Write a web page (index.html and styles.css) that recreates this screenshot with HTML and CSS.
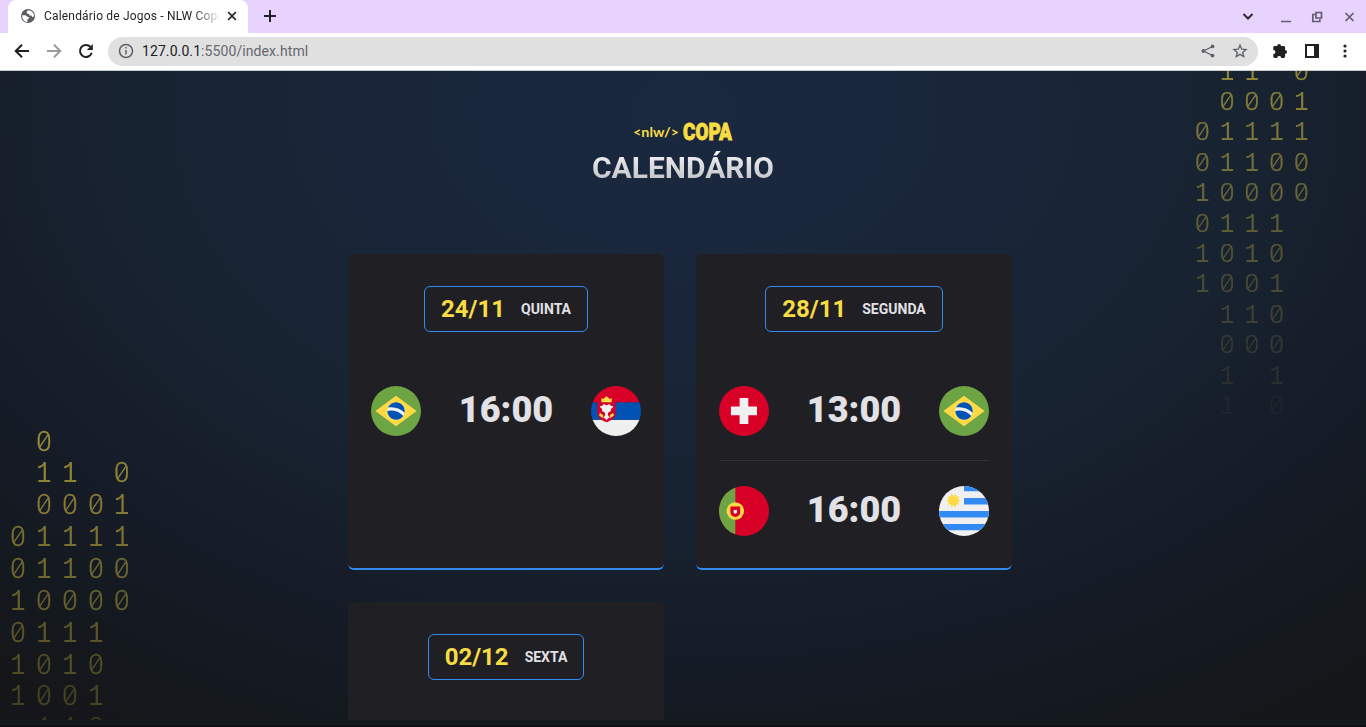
FILE: index.html
```html
<!DOCTYPE html>
<html lang="pt-BR">
<head>
<meta charset="utf-8">
<title>Calendário de Jogos - NLW Copa</title>
<link rel="stylesheet" href="styles.css">
</head>
<body>
<svg class="defs" width="0" height="0">
  <defs>
    <clipPath id="disc"><circle cx="256" cy="256" r="256"/></clipPath>
    <symbol id="brazil" viewBox="0 0 512 512">
      <circle cx="256" cy="256" r="256" fill="#6da544"/>
      <path fill="#ffda44" d="M256 100l211 156-211 156L45 256z"/>
      <circle cx="256" cy="256" r="89" fill="#f0f0f0"/>
      <path fill="#0052b4" d="M212 250c-16 0-30 2-44 7 0 49 40 89 88 89 31 0 58-16 74-39-29-35-71-57-118-57zM343 274c1-6 2-12 2-18 0-49-40-89-89-89-37 0-68 22-82 54 12-3 25-4 38-4 51 0 98 22 131 57z"/>
    </symbol>
    <symbol id="serbia" viewBox="0 0 512 512">
      <g clip-path="url(#disc)">
        <path fill="#f0f0f0" d="M0 345h512v167H0z"/>
        <path fill="#0052b4" d="M0 167h512v178H0z"/>
        <path fill="#d80027" d="M0 0h512v167H0z"/>
        <path fill="#d80027" d="M66 167v109c0 71 93 93 93 93s93-22 93-93V167z"/>
        <path fill="#ffda44" d="M106 167h106v-44l-18 9-35-27-35 27-18-9zM92 275l35 28-8 24-36-26zM226 275l-35 28 8 24 36-26z"/>
        <path fill="#f0f0f0" d="M203 239l26-26c-8-8-16-12-26-12l-18-16-26 14-26-14-18 16c-10 0-18 4-26 12l26 26c-7 12 2 27 19 27l10 13v21l-20 28 20 2 15 20 15-20 20-2-20-28v-21l10-13c17 0 26-15 19-27z"/>
      </g>
    </symbol>
    <symbol id="switzerland" viewBox="0 0 512 512">
      <circle cx="256" cy="256" r="256" fill="#d80027"/>
      <path fill="#f0f0f0" d="M389 211h-89v-89h-89v89h-89v89h89v89h89v-89h89z"/>
    </symbol>
    <symbol id="portugal" viewBox="0 0 512 512">
      <g clip-path="url(#disc)">
        <path fill="#d80027" d="M0 0h512v512H0z"/>
        <path fill="#6da544" d="M0 0h167v512H0z"/>
        <circle cx="167" cy="256" r="89" fill="#ffda44"/>
        <path fill="#d80027" d="M117 211v56c0 28 22 50 50 50s50-22 50-50v-56z"/>
        <path fill="#f0f0f0" d="M150 245v22c0 9 8 17 17 17s17-8 17-17v-22z"/>
      </g>
    </symbol>
    <symbol id="uruguay" viewBox="0 0 512 512">
      <g clip-path="url(#disc)">
        <path fill="#f0f0f0" d="M0 0h512v512H0z"/>
        <path fill="#338af3" d="M256 0h256v55H256zM256 123h256v67H256zM0 256h512v67H0zM0 390h512v63H0z"/>
        <path fill="#ffda44" d="M223 149l-31 14 17 30-33-6-5 33-23-24-23 24-4-33-34 6 17-30-31-14 31-15-17-29 34 6 4-33 23 24 23-24 5 33 33-6-17 29z"/>
      </g>
    </symbol>
  </defs>
</svg>

<div class="browser">
  <header class="tabstrip">
    <div class="tab">
      <svg class="globe" viewBox="0 0 16 16"><circle cx="8" cy="8" r="7" fill="#5a5e63"/><path d="M2.200 7.200l3.300.1 1.800 1.500 1.500.2v1.600l-1.500.9.200 2.600C4.300 14 2 11 2.200 7.200zM8.200 2.200L6.600 3.800l.5 1.700 2 .4.300 1.500h2l.8 1.500 1.800-.5C14.200 5 11.400 2.200 8.200 2.200z" fill="#fff"/></svg>
      <span class="tab-title">Calendário de Jogos - NLW Copa</span>
      <svg class="tab-close" viewBox="0 0 10 10"><path d="M1.200 1.200l7.600 7.600M8.800 1.200L1.200 8.800"/></svg>
    </div>
    <svg class="new-tab" viewBox="0 0 12 12"><path d="M6 0v12M0 6h12"/></svg>
    <svg class="window-controls" viewBox="0 0 112 16">
      <path d="M3.500 5L8 9.500 12.500 5" stroke="#2c2930" stroke-width="2"/>
      <path d="M41 12.500h10M75 5.500h-2.200v7h7v-2.200M76 3.500h5.500v5.500H76zM105.500 4l8 8M113.500 4l-8 8"/>
    </svg>
  </header>
  <nav class="toolbar">
    <svg class="nav-icon" viewBox="0 0 16 16"><path d="M15 8H2M8 1.700L1.700 8 8 14.300"/></svg>
    <svg class="nav-icon muted" viewBox="0 0 16 16"><path d="M1 8h13M8 1.700L14.300 8 8 14.300"/></svg>
    <svg class="nav-icon" viewBox="0 0 16 16"><path d="M13.700 9.800A6 6 0 1 1 12.300 3.800"/><path d="M14.800 1v6H8.800z" class="solid"/></svg>
    <div class="address">
      <svg class="info" viewBox="0 0 16 16"><circle cx="8" cy="8" r="6.500"/><path d="M8 7v4.500M8 4v1.600"/></svg>
      <span class="url"><b>127.0.0.1</b>:5500/index.html</span>
      <svg class="share" viewBox="0 0 14 14"><path d="M11.500 2.500L2.500 7l9 4.500"/><g class="dots"><circle cx="11.500" cy="2.400" r="1.900"/><circle cx="2.400" cy="7" r="1.900"/><circle cx="11.500" cy="11.600" r="1.900"/></g></svg>
      <svg class="star" viewBox="0 0 16 16"><path d="M8 2.200l1.700 4 4.300.4-3.300 2.800 1 4.200L8 11.300l-3.700 2.300 1-4.200L2 6.600l4.300-.4z"/></svg>
    </div>
    <svg class="ext" viewBox="0 0 16 16"><path d="M1.300 4.400c0-.8.600-1.400 1.400-1.400h2.500a1.900 1.900 0 1 1 3.800 0h2.700c.8 0 1.400.600 1.400 1.400V7a1.900 1.900 0 1 1 0 3.800v2.800c0 .8-.6 1.400-1.400 1.400H9.300a2.100 2.100 0 0 0-4.200 0H2.700c-.8 0-1.400-.6-1.400-1.400v-2.400a2.100 2.100 0 0 0 0-4.200z"/></svg>
    <svg class="panel" viewBox="0 0 14 14"><path d="M0 0h14v14H0zM2 2v10h7V2z" fill-rule="evenodd"/></svg>
    <svg class="menu" viewBox="0 0 4 14"><circle cx="2" cy="2" r="1.600"/><circle cx="2" cy="7" r="1.600"/><circle cx="2" cy="12" r="1.600"/></svg>
  </nav>

  <div class="page">
    <svg class="binary binary-left" viewBox="0 0 124 396"></svg>
    <svg class="binary binary-right" viewBox="0 0 124 396"></svg>
    <main>
      <svg class="logo" viewBox="0 0 100 20">
        <text class="logo-nlw" x="0" y="14.600" textLength="46" lengthAdjust="spacingAndGlyphs">&lt;nlw/&gt;</text>
        <text class="logo-copa" x="50" y="18.300" textLength="49" lengthAdjust="spacingAndGlyphs">COPA</text>
      </svg>
      <h1>CALENDÁRIO</h1>
      <section class="cards">
        <article class="card">
          <h2>24/11 <span>QUINTA</span></h2>
          <ul>
            <li><svg><use href="#brazil"/></svg><strong>16:00</strong><svg><use href="#serbia"/></svg></li>
          </ul>
        </article>
        <article class="card">
          <h2>28/11 <span>SEGUNDA</span></h2>
          <ul>
            <li><svg><use href="#switzerland"/></svg><strong>13:00</strong><svg><use href="#brazil"/></svg></li>
            <li><svg><use href="#portugal"/></svg><strong>16:00</strong><svg><use href="#uruguay"/></svg></li>
          </ul>
        </article>
        <article class="card">
          <h2>02/12 <span>SEXTA</span></h2>
        </article>
      </section>
    </main>
  </div>
  <footer class="edge"></footer>
</div>
<script src="binary.js"></script>
</body>
</html>
```
FILE: styles.css
```css
* { box-sizing: border-box; margin: 0; padding: 0; }
body { width: 1366px; height: 727px; overflow: hidden; font-family: Roboto, sans-serif; }
.defs { position: absolute; }
svg { display: block; flex: none; }
.browser { display: flex; flex-direction: column; height: 727px; }

.tabstrip { display: flex; align-items: center; height: 33px; background: #e8d3ff; }
.tab { display: flex; align-items: center; width: 240px; height: 33px; margin-left: 8px; padding: 0 0 1px 12px; background: #fff; border-radius: 8px 8px 0 0; }
.globe { width: 16px; height: 16px; }
.tab-title { width: 175px; margin-left: 8px; overflow: hidden; white-space: nowrap; font-size: 12px; letter-spacing: .18px; color: #1f2023; -webkit-mask: linear-gradient(90deg, #000 150px, transparent 177px); mask: linear-gradient(90deg, #000 150px, transparent 177px); }
.tab-close { width: 10px; height: 10px; margin-left: 8px; fill: none; stroke: #2b2b2e; stroke-width: 1.7; }
.new-tab { width: 12px; height: 12px; margin-left: 16px; margin-bottom: 1px; stroke: #202124; stroke-width: 2; }
.window-controls { width: 112px; height: 16px; margin-left: auto; margin-right: 14px; overflow: visible; fill: none; stroke: #625c6b; stroke-width: 1.7; }

.toolbar { display: flex; align-items: center; height: 38px; padding: 0 19px 1px 14px; background: #fff; border-bottom: 1px solid #c9cccb; }
.nav-icon { width: 16px; height: 16px; margin-right: 16px; fill: none; stroke: #202124; stroke-width: 2; }
.nav-icon .solid { fill: #202124; stroke: none; }
.nav-icon.muted { stroke: #9a9a9c; }
.address { display: flex; align-items: center; width: 1150px; height: 29px; margin-left: -2px; padding: 0 10px; border-radius: 15px; background: #e0e0e0; }
.info { width: 16px; height: 16px; fill: none; stroke: #5f6368; stroke-width: 1.5; }
.url { margin-left: 8px; font-size: 14px; letter-spacing: .09px; color: #65686c; }
.url b { font-weight: 400; color: #202124; }
.share { width: 14px; height: 14px; margin-left: auto; fill: none; stroke: #5f6368; stroke-width: 1.3; }
.share .dots { fill: #5f6368; stroke: none; }
.star { width: 16px; height: 16px; margin-left: 17px; fill: none; stroke: #5f6368; stroke-width: 1.4; }
.ext { width: 16px; height: 16px; margin-left: 14px; fill: #202124; }
.panel { width: 14px; height: 14px; margin-left: 17px; fill: #202124; }
.menu { width: 4px; height: 14px; margin-left: auto; fill: #202124; }

.page { position: relative; height: 649px; overflow: hidden; background: radial-gradient(ellipse 1080px 740px at 50% 6%, #1a2840 0%, #192639 30%, #182331 52%, #161c28 72%, #14191f 88%, #151619 100%); }
.edge { height: 7px; background: #11191d; border-bottom: 2px solid #0d0f13; }
.binary { position: absolute; width: 124px; height: 396px; overflow: visible; fill: #f7dd43; }
.binary-right { left: 1190px; top: -52px; }
.binary-left { left: 5px; top: 348px; width: 130px; height: 415px; }
.zero { font: 300 26.5px Roboto, sans-serif; text-anchor: middle; stroke: #f7dd43; stroke-width: .25; }
.one { font: 27.500px "Liberation Mono", monospace; text-anchor: middle; }
.slash { stroke: #f7dd43; stroke-width: 1.3; }

main { position: relative; width: 670px; margin: 0 auto; padding-top: 51px; }
.logo { width: 100px; height: 20px; margin: 0 auto; overflow: visible; fill: #f7dd43; }
.logo-nlw { font: 700 14px Lato, sans-serif; }
.logo-copa { font: 900 24px Roboto, sans-serif; stroke: #f7dd43; stroke-width: .9; stroke-linejoin: miter; }
h1 { height: 38px; margin-top: 7px; text-align: center; font-size: 30px; line-height: 38px; font-weight: 700; color: transparent; background: linear-gradient(#f6f6f8 0%, #b9babe 100%); -webkit-background-clip: text; background-clip: text; }
.cards { display: grid; grid-template-columns: 316px 316px; gap: 32px; margin: 67px 0 0; }
.card { display: flex; flex-direction: column; align-items: center; height: 316px; padding: 32px 23px 0; border-radius: 6px; border-bottom: 2px solid #328af0; background: #202024; }
h2 { display: flex; align-items: center; gap: 16px; height: 46px; padding: 0 16px; border: 1px solid #328af0; border-radius: 6px; font-size: 24px; font-weight: 700; color: #f7dd43; }
h2 span { font-size: 14px; color: #e1e1e6; }
ul { width: 270px; margin-top: 29px; list-style: none; }
li { display: flex; align-items: center; justify-content: space-between; height: 99px; }
li + li { height: 100px; border-top: 1px solid #323238; }
li svg { width: 50px; height: 50px; }
li strong { padding-bottom: 2px; font-size: 36px; line-height: 42px; font-weight: 900; color: #e1e1e6; }
```
FILE: binary.js
```js
const rows = [" 0   ", " 11 0", " 0001", "01111", "01100", "10000", "0111 ", "1010 ", "1001 ", " 110 ", " 000 ", " 1 1 ", " 1 0 "];
const ns = "http://www.w3.org/2000/svg";

function add(parent, tag, attrs, text) {
  const node = document.createElementNS(ns, tag);
  for (const key in attrs) node.setAttribute(key, attrs[key]);
  if (text) node.textContent = text;
  parent.append(node);
  return node;
}

document.querySelectorAll(".binary").forEach((svg) => {
  rows.forEach((row, r) => {
    const g = add(svg, "g", { opacity: 0.58 - r * 0.045 });
    const y = 30.1 + r * 30.4;
    [...row].forEach((digit, c) => {
      if (digit === " ") return;
      const x = 12.4 + c * 24.75;
      const digitBox = add(g, "g", { transform: `translate(${x} ${y})` + (digit === "1" ? " scale(.86 1)" : "") });
      add(digitBox, "text", { x: 0, y: 0, class: digit === "0" ? "zero" : "one" }, digit);
      if (digit === "0") add(digitBox, "line", { x1: -4, y1: -3.5, x2: 4, y2: -15.3, class: "slash" });
    });
  });
});
```
